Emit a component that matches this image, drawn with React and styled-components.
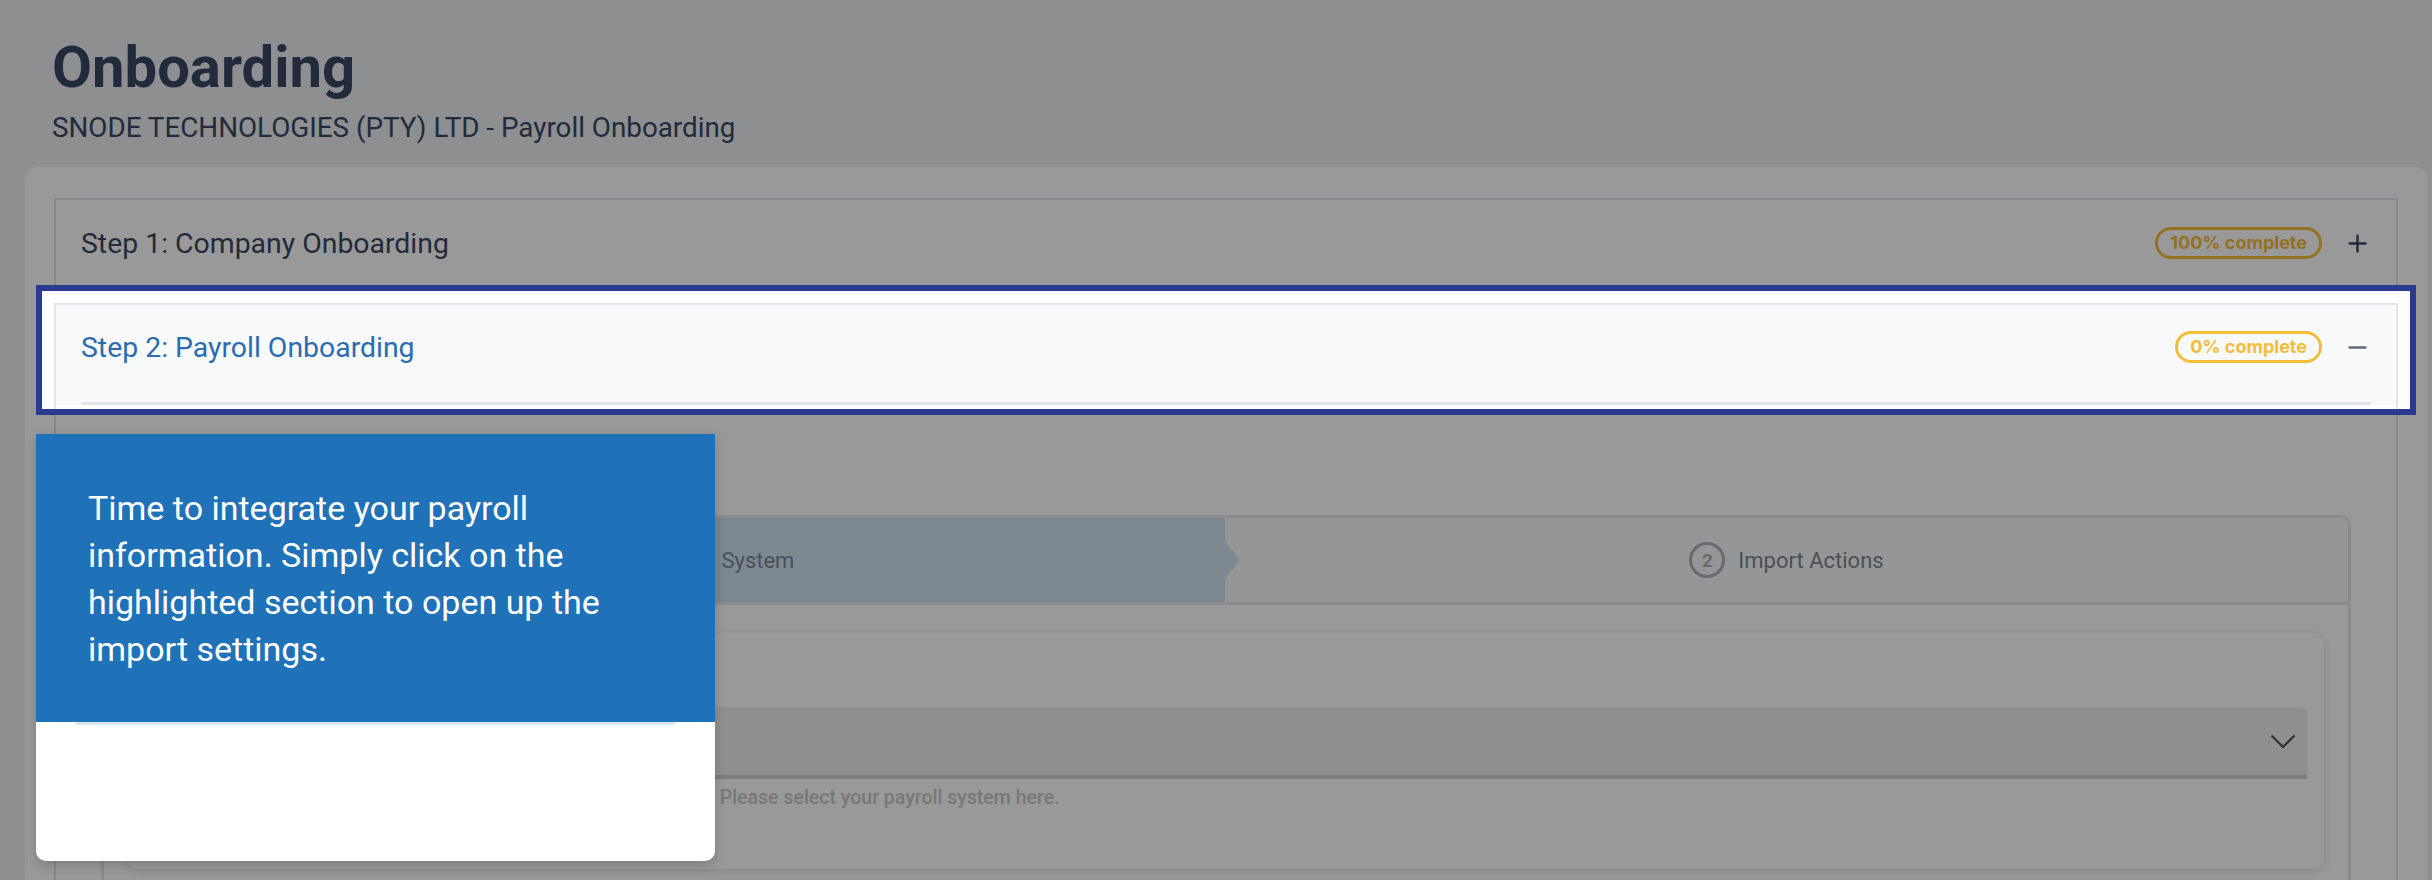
import React from "react";
import styled, { createGlobalStyle } from "styled-components";
import { Plus, Minus } from "lucide-react";

const GlobalStyle = createGlobalStyle`
  html, body {
    margin: 0;
    padding: 0;
    overflow: hidden;
    background: #eceef1;
    font-family: Roboto, "Noto Sans", sans-serif;
  }
`;

export default function App() {
  return (
    <>
      <GlobalStyle />
      <Page>
        <PageHeader>
          <Title>Onboarding</Title>
          <Subtitle>SNODE TECHNOLOGIES (PTY) LTD - Payroll Onboarding</Subtitle>
        </PageHeader>

        <Card>
          <Item>
            <HeaderRow>
              <StepTitle>Step 1: Company Onboarding</StepTitle>
              <Badge>100% complete</Badge>
              <Toggle>
                <Plus size={27} strokeWidth={2.2} />
              </Toggle>
            </HeaderRow>
          </Item>

          <Item open>
            <ItemHeader>
              <HeaderRow short>
                <StepTitle active>Step 2: Payroll Onboarding</StepTitle>
                <Badge>0% complete</Badge>
                <Toggle muted>
                  <Minus size={27} strokeWidth={2.2} />
                </Toggle>
              </HeaderRow>
              <Divider />
            </ItemHeader>

            <ItemBody>
              <Stepper>
                <Tabs>
                  <Tab active>
                    <StepNumber active>1</StepNumber>
                    Select Payroll System
                  </Tab>
                  <Tab>
                    <StepNumber>2</StepNumber>
                    Import Actions
                  </Tab>
                </Tabs>
                <Panel>
                  <InnerCard>
                    <FieldLabel>Payroll System</FieldLabel>
                    <Select>
                      <SelectValue>Select an option</SelectValue>
                      <svg width="26" height="15" viewBox="0 0 26 15" fill="none">
                        <polyline points="1.5,1.5 13,13 24.5,1.5" stroke="#4a4f59" strokeWidth="2.2" />
                      </svg>
                    </Select>
                    <Helper>
                      This is the system you currently run your monthly staff payroll on. Please select your payroll
                      system here.
                    </Helper>
                  </InnerCard>
                </Panel>
              </Stepper>
            </ItemBody>
          </Item>
        </Card>

        <Spotlight />

        <TourTip>
          <TipBody>
            Time to integrate your payroll information. Simply click on the highlighted section to open up the import
            settings.
          </TipBody>
          <TipFooter />
        </TourTip>
      </Page>
    </>
  );
}

const Page = styled.div`
  position: relative;
  min-height: 880px;
  padding-top: 32px;
`;

const PageHeader = styled.header`
  padding-left: 52px;
  color: #3a4863;
`;

const Title = styled.h1`
  margin: 0;
  font-size: 58px;
  line-height: 70px;
  font-weight: 700;
`;

const Subtitle = styled.div`
  margin-top: 8px;
  font-size: 27.8px;
  line-height: 36px;
`;

const Card = styled.div`
  margin: 21px 5px 0 25px;
  padding: 31px 29px 0;
  background: #fff;
  border-radius: 12px;
  min-height: 720px;
`;

const Item = styled.div`
  border: 2px solid #e2e5ea;
  margin-bottom: ${(p) => (p.open ? 0 : "15px")};
  background: #fff;
`;

const ItemHeader = styled.div`
  background: #f8f9fb;
  padding: 0 25px;
`;

const HeaderRow = styled.div`
  display: flex;
  align-items: center;
  height: ${(p) => (p.short ? "84px" : "86px")};
  padding: ${(p) => (p.short ? 0 : "0 25px")};
`;

const StepTitle = styled.div`
  flex: 1;
  font-size: 28.4px;
  color: ${(p) => (p.active ? "#2b6cb0" : "#3a4863")};
`;

const Badge = styled.span`
  font-family: Inter, Roboto, sans-serif;
  font-weight: 700;
  font-size: 18px;
  line-height: 26px;
  color: #f4bd37;
  border: 3px solid #f4bd37;
  border-radius: 20px;
  padding: 0 12px;
  margin-right: 22px;
`;

const Toggle = styled.span`
  display: flex;
  width: 27px;
  justify-content: center;
  color: ${(p) => (p.muted ? "#5f6b7a" : "#3a4863")};
`;

const Divider = styled.div`
  margin-top: 13px;
  height: 3px;
  background: #e2e5ea;
`;

const ItemBody = styled.div`
  padding: 110px 45px 0;
`;

const Stepper = styled.div`
  border: 3px solid #e6e8ec;
  border-bottom: none;
  border-radius: 10px 10px 0 0;
  min-height: 500px;
`;

const Tabs = styled.div`
  display: flex;
  height: 84px;
  border-bottom: 3px solid #e6e8ec;
`;

const Tab = styled.div`
  position: relative;
  flex: ${(p) => (p.active ? "0 0 1121px" : "1")};
  display: flex;
  align-items: center;
  justify-content: center;
  gap: 13px;
  font-size: 22px;
  color: ${(p) => (p.active ? "#7a8795" : "#80858d")};
  background: ${(p) => (p.active ? "#d0e3f0" : "#f8fafd")};
  border-radius: ${(p) => (p.active ? "7px 0 0 0" : "0 7px 0 0")};

  ${(p) =>
    p.active &&
    `
    &::after {
      content: "";
      position: absolute;
      right: -14px;
      top: 50%;
      margin-top: -18px;
      border-left: 14px solid #d0e3f0;
      border-top: 18px solid transparent;
      border-bottom: 18px solid transparent;
      filter: drop-shadow(1px 0 0 #e3e6ea);
      z-index: 1;
    }
  `}
`;

const StepNumber = styled.span`
  width: 30px;
  height: 30px;
  border-radius: 50%;
  border: 3px solid ${(p) => (p.active ? "#7a8795" : "#adb2b9")};
  display: flex;
  align-items: center;
  justify-content: center;
  font-size: 19px;
  font-weight: 700;
  color: ${(p) => (p.active ? "#7a8795" : "#adb2b9")};
`;

const Panel = styled.div`
  padding: 28px 24px;
`;

const InnerCard = styled.div`
  background: #fff;
  border-radius: 10px;
  box-shadow: 0 2px 8px rgba(0, 0, 0, 0.12);
  padding: 26px 17px 58px;
`;

const FieldLabel = styled.div`
  font-size: 20px;
  line-height: 28px;
  margin-bottom: 20px;
  color: #4a5568;
`;

const Select = styled.div`
  height: 68px;
  display: flex;
  align-items: center;
  justify-content: space-between;
  padding: 0 11px 0 20px;
  background: #eeeeee;
  border-bottom: 4px solid #cfcfcf;
  border-radius: 6px 6px 0 0;
`;

const SelectValue = styled.span`
  font-size: 20px;
  color: #9aa1ab;
`;

const Helper = styled.div`
  margin-top: 6px;
  font-size: 19.5px;
  line-height: 26px;
  font-weight: 500;
  color: #c9c9c9;
`;

const Spotlight = styled.div`
  position: absolute;
  left: 36px;
  top: 285px;
  width: 2380px;
  height: 130px;
  box-sizing: border-box;
  border: 6px solid #2b3990;
  box-shadow: 0 0 0 4000px rgba(0, 0, 0, 0.4);
  z-index: 2;
  pointer-events: none;
`;

const TourTip = styled.div`
  position: absolute;
  left: 36px;
  top: 434px;
  width: 679px;
  background: #fff;
  border-radius: 0 0 10px 10px;
  overflow: hidden;
  box-shadow: 0 4px 12px rgba(0, 0, 0, 0.18);
  z-index: 3;
`;

const TipBody = styled.div`
  background: #1f71b8;
  color: #fff;
  padding: 51px 52px 49px;
  font-size: 34px;
  line-height: 47px;
`;

const TipFooter = styled.div`
  height: 139px;
  margin: 0 40px;
  box-sizing: border-box;
  border-top: 3px solid #dce6f0;
`;
